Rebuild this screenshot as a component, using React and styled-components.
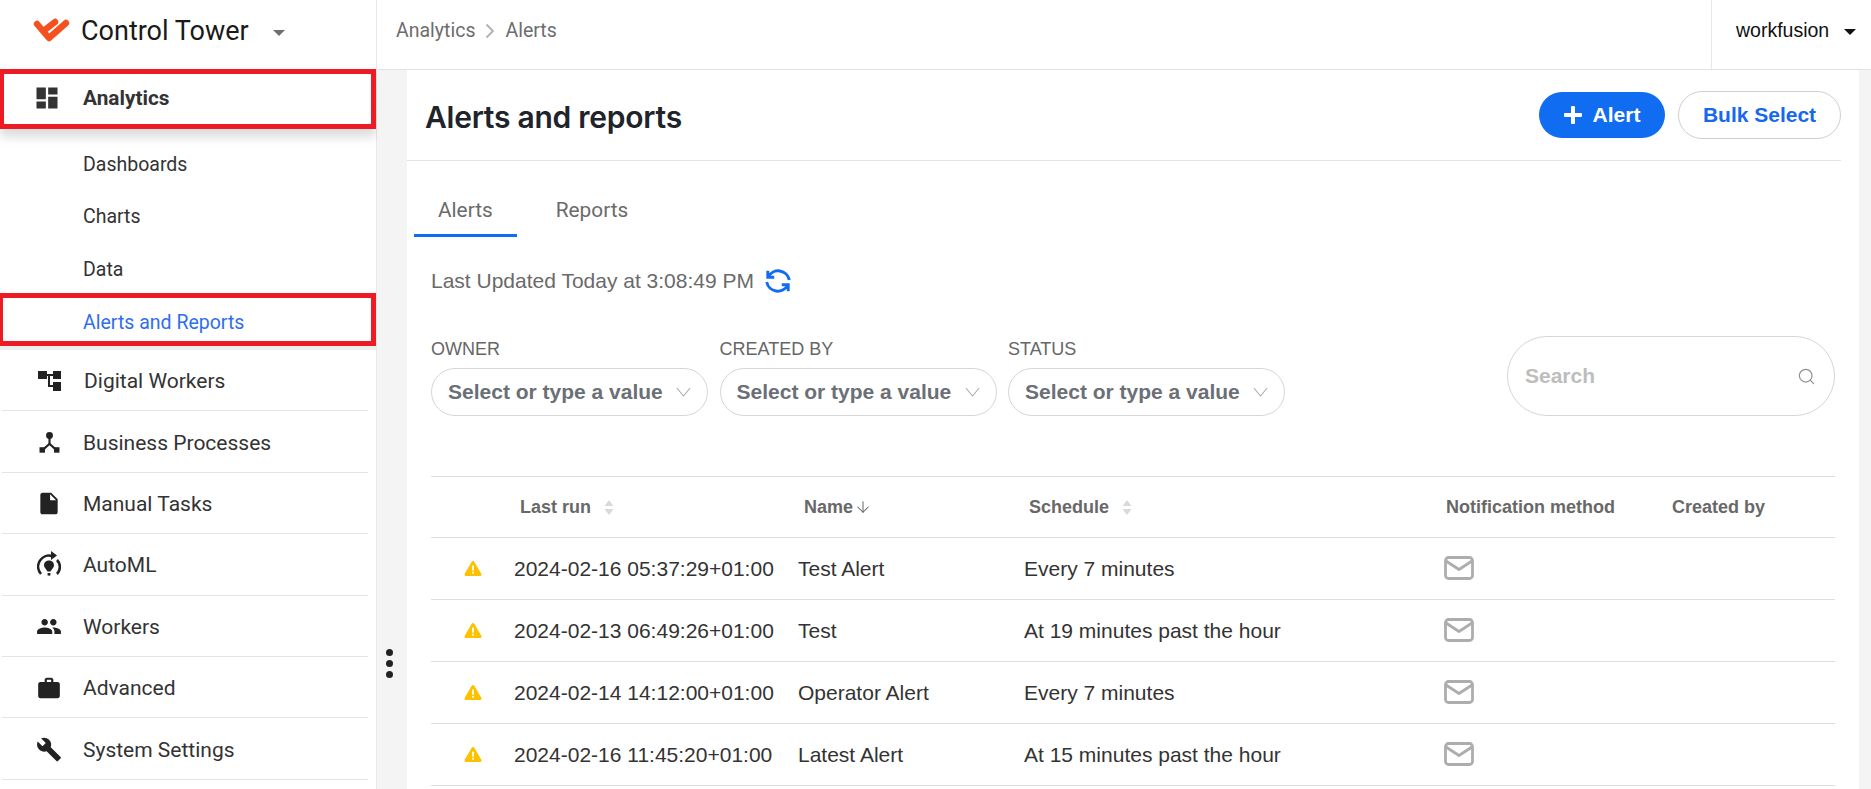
import React from "react";
import styled, { createGlobalStyle } from "styled-components";
import { MdDashboard, MdInsertDriveFile, MdPeople, MdWork, MdBuild } from "react-icons/md";
import { ArrowDown, Search as SearchGlyph } from "lucide-react";

const GlobalStyle = createGlobalStyle`
  html, body {
    margin: 0;
    padding: 0;
    height: 100%;
    overflow: hidden;
    background: #fff;
  }
  * {
    box-sizing: border-box;
  }
`;

const COLUMNS = "83px 284px 226px 420px 228px 1fr";

const Page = styled.div`
  display: flex;
  width: 1871px;
  height: 789px;
  overflow: hidden;
  font-family: "Liberation Sans", Arial, sans-serif;
`;

const Sidebar = styled.aside`
  flex: 0 0 377px;
  border-right: 1px solid #e8e8e8;
  font-family: Roboto, sans-serif;
  color: #333;
`;

const Brand = styled.div`
  display: flex;
  align-items: center;
  height: 69px;
  padding: 0 0 8px 33px;
  color: #1a1a1a;
  font-size: 27px;
  font-weight: 400;
  svg {
    margin: 2px 11px 0 0;
  }
`;

const Caret = styled.span`
  width: 0;
  height: 0;
  border-left: 6px solid transparent;
  border-right: 6px solid transparent;
  border-top: 6px solid ${(p) => p.$color || "#6f6f6f"};
`;

const BrandCaret = styled(Caret)`
  margin-left: 24px;
  margin-top: 5px;
`;

const AnalyticsRow = styled.div`
  display: flex;
  align-items: center;
  height: 60px;
  padding: 0 0 2px 29px;
  border: 5px solid #ed1c24;
  border-left-width: 4px;
  font-size: 20.8px;
  font-weight: 700;
  box-shadow: 0 8px 10px rgba(0, 0, 0, 0.14);
  position: relative;
  svg {
    font-size: 28px;
    margin-right: 22px;
    color: #333;
  }
`;

const SubList = styled.div`
  padding-top: 9px;
`;

const SubItem = styled.div`
  display: flex;
  align-items: center;
  height: 52.5px;
  padding-left: 83px;
  font-size: 19.5px;
`;

const SubItemActive = styled(SubItem)`
  height: 53px;
  margin-top: -2.5px;
  padding-left: 80px;
  padding-top: 5px;
  border: 5px solid #ed1c24;
  border-left-width: 3px;
  color: #2f6eed;
`;

const Band = styled.div`
  height: 4px;
  background: #eeeeee;
`;

const NavList = styled.div`
  padding: 0 8px 0 2px;
`;

const NavRow = styled.div`
  display: flex;
  align-items: center;
  height: 61.4px;
  padding-top: 2px;
  border-bottom: 1px solid #e4e4e4;
  font-size: 21px;
  color: #333;
`;

const NavIcon = styled.span`
  display: flex;
  justify-content: center;
  width: 26px;
  margin: 0 ${(p) => p.$gap || 21}px 0 34px;
  color: #222;
  font-size: 27px;
`;

const Main = styled.div`
  flex: 1;
  display: flex;
  flex-direction: column;
  min-width: 0;
`;

const TopBar = styled.header`
  display: flex;
  align-items: stretch;
  height: 70px;
  flex: none;
  border-bottom: 1px solid #e2e2e2;
`;

const Crumbs = styled.div`
  flex: 1;
  display: flex;
  align-items: center;
  padding: 0 0 8px 19px;
  font-family: Roboto, sans-serif;
  font-size: 19.5px;
  color: #6d6d6d;
  svg {
    margin: 0 10px;
  }
`;

const UserMenu = styled.div`
  flex: 0 0 160px;
  display: flex;
  align-items: center;
  padding: 0 0 8px 24px;
  border-left: 1px solid #e8e8e8;
  font-size: 19.5px;
  color: #111;
`;

const UserCaret = styled(Caret)`
  margin-left: 15px;
  margin-top: 2px;
`;

const Workspace = styled.div`
  flex: 1;
  display: flex;
  background: #f4f4f4;
  padding: 0 12px 0 30px;
  position: relative;
  min-height: 0;
`;

const Dots = styled.div`
  position: absolute;
  left: 9px;
  top: 579px;
  display: flex;
  flex-direction: column;
  gap: 4px;
  span {
    width: 7px;
    height: 7px;
    border-radius: 50%;
    background: #222;
  }
`;

const Panel = styled.main`
  flex: 1;
  background: #fff;
  min-width: 0;
`;

const TitleRow = styled.div`
  display: flex;
  align-items: center;
  justify-content: space-between;
  height: 91px;
  margin-right: 18px;
  padding-left: 18px;
  border-bottom: 1px solid #e4e4e4;
`;

const Title = styled.h1`
  margin: 4px 0 0;
  font-family: Inter, sans-serif;
  font-weight: 600;
  font-size: 30px;
  letter-spacing: -0.25px;
  color: #20242a;
`;

const Actions = styled.div`
  display: flex;
  align-items: center;
  gap: 13px;
`;

const Pill = styled.button`
  display: flex;
  align-items: center;
  justify-content: center;
  gap: 11px;
  height: ${(p) => (p.$primary ? 46 : 48)}px;
  width: ${(p) => (p.$primary ? 126 : 163)}px;
  border-radius: 24px;
  border: ${(p) => (p.$primary ? "none" : "1px solid #cfcfcf")};
  background: ${(p) => (p.$primary ? "#106cf0" : "#fff")};
  color: ${(p) => (p.$primary ? "#fff" : "#1668ee")};
  font-family: inherit;
  font-size: 21px;
  font-weight: 700;
`;

const Tabs = styled.div`
  display: flex;
  margin: 22px 0 0 7px;
`;

const Tab = styled.div`
  display: flex;
  align-items: center;
  height: 54px;
  padding: 3px 24px 0;
  margin-right: 15px;
  font-family: Roboto, sans-serif;
  font-size: 20.8px;
  color: #6a6a6a;
  border-bottom: 3px solid ${(p) => (p.$active ? "#106cf0" : "transparent")};
`;

const Updated = styled.div`
  display: flex;
  align-items: center;
  gap: 10px;
  height: 30px;
  margin: 29px 0 0 24px;
  font-size: 21px;
  color: #6a6a6a;
`;

const FilterBar = styled.div`
  display: flex;
  align-items: flex-end;
  gap: 11.5px;
  margin: 40px 24px 0 24px;
`;

const Filter = styled.div`
  display: flex;
  flex-direction: column;
  gap: 8px;
  width: 277px;
`;

const FilterLabel = styled.label`
  font-size: 18px;
  line-height: 22px;
  color: #666;
`;

const Select = styled.div`
  display: flex;
  align-items: center;
  justify-content: space-between;
  height: 48px;
  padding: 0 16px 0 16px;
  border: 1px solid #d6d6d6;
  border-radius: 24px;
  font-size: 21px;
  font-weight: 700;
  color: #6b6f76;
`;

const SearchBox = styled.div`
  display: flex;
  align-items: center;
  justify-content: space-between;
  width: 328px;
  height: 80px;
  margin-left: auto;
  padding: 0 18px 0 17px;
  border: 1px solid #d6d6d6;
  border-radius: 40px;
  font-size: 21px;
  font-weight: 700;
  color: #bdbdbd;
  svg {
    color: #8f8f8f;
  }
`;

const Table = styled.div`
  margin: 60px 24px 0 24px;
  border-top: 1px solid #dedede;
`;

const HeadRow = styled.div`
  display: grid;
  grid-template-columns: ${COLUMNS};
  align-items: center;
  height: 61px;
  border-bottom: 1px solid #dedede;
  font-size: 18px;
  font-weight: 700;
  color: #686868;
`;

const HeadCell = styled.div`
  display: flex;
  align-items: center;
  padding-left: ${(p) => p.$pad || 0}px;
  svg.arrow {
    color: #6a6a6a;
    margin-left: 1px;
  }
`;

const Row = styled.div`
  display: grid;
  grid-template-columns: ${COLUMNS};
  align-items: center;
  height: 62px;
  border-bottom: 1px solid #dedede;
  font-size: 21px;
  color: #333;
`;

const StatusCell = styled.div`
  display: flex;
  padding-left: 33px;
`;

const MailCell = styled.div`
  display: flex;
  align-items: center;
  padding-bottom: 2px;
`;

const Sorter = styled.svg`
  margin-left: 13px;
`;

// small inline drawings that the icon packages have no match for
const Logo = () => (
  <svg width="37" height="27" viewBox="0 0 37 27" fill="none" stroke="#f4511e" strokeWidth="6.4" strokeLinecap="round" strokeLinejoin="round">
    <path d="M4 6 L16 20 L33 5" />
    <path d="M13 11 L22 4" />
  </svg>
);

const Chevron = () => (
  <svg width="15" height="10" viewBox="0 0 17 11" fill="none" stroke="#a8a8a8" strokeWidth="1.2">
    <path d="M1 1 L8.5 10 L16 1" />
  </svg>
);

const CrumbArrow = () => (
  <svg width="10" height="16" viewBox="0 0 10 16" fill="none" stroke="#b0b0b0" strokeWidth="1.8">
    <path d="M1.5 1.5 L8 8 L1.5 14.5" />
  </svg>
);

const SortIcon = () => (
  <Sorter width="10" height="15" viewBox="0 0 10 15" fill="#d9d9d9">
    <path d="M5 0 L9.5 6 H0.5 Z M5 15 L9.5 9 H0.5 Z" />
  </Sorter>
);

const Mail = () => (
  <svg width="30" height="24" viewBox="0 0 30 24" fill="none" stroke="#adadad" strokeWidth="2.8" strokeLinejoin="round">
    <rect x="1.5" y="1.5" width="27" height="21" rx="3" />
    <path d="M2 5 L15 13.5 L28 5" />
  </svg>
);

const Plus = () => (
  <svg width="18" height="18" viewBox="0 0 18 18" fill="#fff">
    <path d="M7 1 Q7 0 8 0 H10 Q11 0 11 1 V7 H17 Q18 7 18 8 V10 Q18 11 17 11 H11 V17 Q11 18 10 18 H8 Q7 18 7 17 V11 H1 Q0 11 0 10 V8 Q0 7 1 7 H7 Z" />
  </svg>
);

const RefreshIcon = () => (
  <svg width="28" height="28" viewBox="0 0 26 26" fill="none" stroke="#106cf0" strokeWidth="2.7">
    <path d="M4 9 A10.5 10.5 0 0 1 23.5 12" />
    <path d="M3.5 3.5 V9.5 H9.5" />
    <path d="M22 17 A10.5 10.5 0 0 1 2.5 14" />
    <path d="M22.5 22.5 V16.5 H16.5" />
  </svg>
);

const Warning = () => (
  <svg width="18" height="17" viewBox="0 0 18 17">
    <path d="M9 2.5 L16 14.5 H2 Z" fill="#fcc200" stroke="#fcc200" strokeWidth="3" strokeLinejoin="round" />
    <rect x="8.1" y="5.6" width="1.8" height="5" fill="#fff" />
    <rect x="8.1" y="11.8" width="1.8" height="1.8" fill="#fff" />
  </svg>
);

const TreeIcon = () => (
  <svg width="24" height="21" viewBox="0 0 24 21" fill="currentColor">
    <rect x="1" y="0" width="9" height="8" />
    <rect x="16" y="0" width="8" height="8" />
    <rect x="16" y="11" width="8" height="9" />
    <rect x="10" y="3" width="6" height="2" />
    <rect x="11" y="3" width="2" height="13" />
    <rect x="11" y="14" width="5" height="2" />
  </svg>
);

const ProcessIcon = () => (
  <svg width="21" height="21" viewBox="0 0 20 20" fill="currentColor">
    <circle cx="10" cy="3.4" r="3.3" />
    <rect x="9" y="5" width="2" height="7" />
    <path d="M10 10 L17.4 16.4 L16 18 L10 12.6 L4 18 L2.6 16.4 Z" />
    <rect x="0.5" y="14.5" width="5.2" height="5.2" />
    <rect x="14.3" y="14.5" width="5.2" height="5.2" />
  </svg>
);

const AutoIcon = () => (
  <svg width="24" height="28" viewBox="0 0 24 28" fill="none" stroke="currentColor" strokeWidth="2.6">
    <path d="M4 23 A11 11 0 0 1 15 5" />
    <path d="M20 9 A10 10 0 0 1 20 23" />
    <path d="M14 0 L20 4.6 L14 9 Z" fill="currentColor" stroke="none" />
    <path d="M12 9.5 C15.2 9.5 17 11.7 17 14.2 C17 16.6 14.5 18.4 13.5 20.5 H10.5 C9.5 18.4 7 16.6 7 14.2 C7 11.7 8.8 9.5 12 9.5 Z" fill="currentColor" stroke="none" />
    <rect x="10.6" y="22" width="2.8" height="2.6" fill="currentColor" stroke="none" />
  </svg>
);

const navItems = [
  { label: "Digital Workers", icon: <TreeIcon />, gap: 22 },
  { label: "Business Processes", icon: <ProcessIcon /> },
  { label: "Manual Tasks", icon: <MdInsertDriveFile /> },
  { label: "AutoML", icon: <AutoIcon /> },
  { label: "Workers", icon: <MdPeople /> },
  { label: "Advanced", icon: <MdWork /> },
  { label: "System Settings", icon: <MdBuild /> },
];

const alerts = [
  { run: "2024-02-16 05:37:29+01:00", name: "Test Alert", schedule: "Every 7 minutes" },
  { run: "2024-02-13 06:49:26+01:00", name: "Test", schedule: "At 19 minutes past the hour" },
  { run: "2024-02-14 14:12:00+01:00", name: "Operator Alert", schedule: "Every 7 minutes" },
  { run: "2024-02-16 11:45:20+01:00", name: "Latest Alert", schedule: "At 15 minutes past the hour" },
];

const filters = ["OWNER", "CREATED BY", "STATUS"];

const App = () => {
  return (
    <Page>
      <GlobalStyle />
      <Sidebar>
        <Brand>
          <Logo />
          Control Tower
          <BrandCaret />
        </Brand>
        <AnalyticsRow>
          <MdDashboard />
          Analytics
        </AnalyticsRow>
        <SubList>
          <SubItem>Dashboards</SubItem>
          <SubItem>Charts</SubItem>
          <SubItem>Data</SubItem>
          <SubItemActive>Alerts and Reports</SubItemActive>
        </SubList>
        <Band />
        <NavList>
          {navItems.map((item) => (
            <NavRow key={item.label}>
              <NavIcon $gap={item.gap}>{item.icon}</NavIcon>
              {item.label}
            </NavRow>
          ))}
        </NavList>
      </Sidebar>
      <Main>
        <TopBar>
          <Crumbs>
            Analytics
            <CrumbArrow />
            Alerts
          </Crumbs>
          <UserMenu>
            workfusion
            <UserCaret $color="#111" />
          </UserMenu>
        </TopBar>
        <Workspace>
          <Dots>
            <span />
            <span />
            <span />
          </Dots>
          <Panel>
            <TitleRow>
              <Title>Alerts and reports</Title>
              <Actions>
                <Pill $primary>
                  <Plus />
                  Alert
                </Pill>
                <Pill>Bulk Select</Pill>
              </Actions>
            </TitleRow>
            <Tabs>
              <Tab $active>Alerts</Tab>
              <Tab>Reports</Tab>
            </Tabs>
            <Updated>
              Last Updated Today at 3:08:49 PM
              <RefreshIcon />
            </Updated>
            <FilterBar>
              {filters.map((label) => (
                <Filter key={label}>
                  <FilterLabel>{label}</FilterLabel>
                  <Select>
                    Select or type a value
                    <Chevron />
                  </Select>
                </Filter>
              ))}
              <SearchBox>
                Search
                <SearchGlyph size={19} strokeWidth={1.5} />
              </SearchBox>
            </FilterBar>
            <Table>
              <HeadRow>
                <HeadCell />
                <HeadCell $pad={6}>
                  Last run
                  <SortIcon />
                </HeadCell>
                <HeadCell $pad={6}>
                  Name
                  <ArrowDown className="arrow" size={18} strokeWidth={1.4} />
                </HeadCell>
                <HeadCell $pad={5}>
                  Schedule
                  <SortIcon />
                </HeadCell>
                <HeadCell $pad={2}>Notification method</HeadCell>
                <HeadCell>Created by</HeadCell>
              </HeadRow>
              {alerts.map((alert) => (
                <Row key={alert.run}>
                  <StatusCell>
                    <Warning />
                  </StatusCell>
                  <div>{alert.run}</div>
                  <div>{alert.name}</div>
                  <div>{alert.schedule}</div>
                  <MailCell>
                    <Mail />
                  </MailCell>
                  <div />
                </Row>
              ))}
            </Table>
          </Panel>
        </Workspace>
      </Main>
    </Page>
  );
};

export default App;
